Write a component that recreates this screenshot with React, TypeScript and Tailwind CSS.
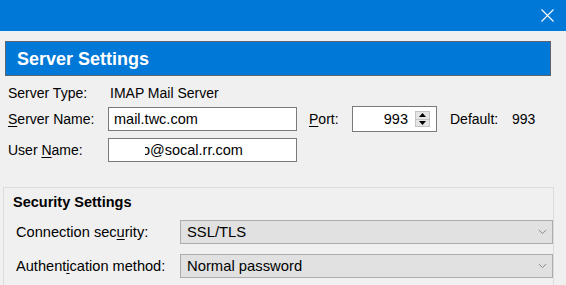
import React from 'react';

function Acc({ children }: { children: React.ReactNode }) {
  // access-key letter, underlined like a Windows dialog
  return <span className="underline decoration-1 underline-offset-[2px]">{children}</span>;
}

function Chevron() {
  return (
    <svg width="9" height="6" viewBox="0 0 9 6" className="shrink-0">
      <path d="M0.8 1 L4.5 4.6 L8.2 1" fill="none" stroke="#8a8a8a" strokeWidth="1" />
    </svg>
  );
}

function SelectBox({ value }: { value: string }) {
  return (
    <div className="flex-1 h-[24px] bg-[#e1e1e1] border border-[#adadad] flex items-center justify-between pl-[6px] pr-[5px] text-black text-[14.8px]">
      <span>{value}</span>
      <Chevron />
    </div>
  );
}

export default function App() {
  return (
    <div
      className="w-[566px] h-[285px] overflow-hidden bg-[#f0f0f0] text-[14px] leading-[16px] text-black"
      style={{ fontFamily: '"Liberation Sans", Arial, sans-serif' }}
    >
      {/* title bar */}
      <div className="h-[31px] bg-[#0078d7] flex items-center justify-end pr-[12px]">
        <svg width="13" height="13" viewBox="0 0 13 13">
          <path d="M0.5 0.5 L12.5 12.5 M12.5 0.5 L0.5 12.5" stroke="#ffffff" strokeWidth="1.1" />
        </svg>
      </div>

      {/* header */}
      <div className="mt-[10px] ml-[5px] w-[546px] h-[35px] bg-[#0078d7] border border-[#5d6670] flex items-center pl-[11px]">
        <span className="text-white font-bold text-[18px] leading-[20px]">Server Settings</span>
      </div>

      {/* server fields */}
      <div className="pl-[8px] mt-[9px] flex flex-col">
        <div className="flex h-[16px]">
          <span className="w-[102px]">Server Type:</span>
          <span>IMAP Mail Server</span>
        </div>

        <div className="flex items-center h-[26px] mt-[5px]">
          <span className="w-[100px]">
            <Acc>S</Acc>erver Name:
          </span>
          <div className="w-[189px] h-[24px] border border-[#7a7a7a] bg-white flex items-center pl-[5px] text-[14.5px]">
            mail.twc.com
          </div>
          <span className="ml-[12px] w-[43px]">
            <Acc>P</Acc>ort:
          </span>
          <div className="w-[85px] h-[26px] border border-[#7a7a7a] bg-white flex items-center justify-end pr-[6px] gap-[7px] text-[14.5px]">
            <span>993</span>
            <div className="w-[15px] h-[16px] bg-[#e5e5e5] border border-[#c4c4c4] flex flex-col">
              <div className="flex-1 flex items-center justify-center border-b border-[#c4c4c4]">
                <svg width="7" height="4" viewBox="0 0 7 4">
                  <path d="M3.5 0 L7 4 L0 4 Z" fill="#000" />
                </svg>
              </div>
              <div className="flex-1 flex items-center justify-center">
                <svg width="7" height="4" viewBox="0 0 7 4">
                  <path d="M0 0 L7 0 L3.5 4 Z" fill="#000" />
                </svg>
              </div>
            </div>
          </div>
          <span className="ml-[13px] w-[62px]">Default:</span>
          <span>993</span>
        </div>

        <div className="flex items-center h-[24px] mt-[6px]">
          <span className="w-[100px]">
            User <Acc>N</Acc>ame:
          </span>
          <div className="w-[189px] h-[24px] border border-[#7a7a7a] bg-white flex items-center pl-[36px] text-[14.5px]">
            <span className="inline-block w-[5px] overflow-hidden">
              <span className="inline-block -ml-[3px]">o</span>
            </span>
            <span>@socal.rr.com</span>
          </div>
        </div>
      </div>

      {/* security group */}
      <div className="mt-[25px] ml-[3px] w-[551px] h-[120px] border border-[#dcdcdc] pt-[6px]">
        <div className="pl-[9px] font-bold text-[14.5px] leading-[17px]">Security Settings</div>
        <div className="flex items-center mt-[9px] pl-[12px] text-[14.6px]">
          <span className="w-[164px]">
            Connection sec<Acc>u</Acc>rity:
          </span>
          <SelectBox value="SSL/TLS" />
        </div>
        <div className="flex items-center mt-[10px] pl-[12px] text-[14.6px]">
          <span className="w-[164px]">
            Authent<Acc>i</Acc>cation method:
          </span>
          <SelectBox value="Normal password" />
        </div>
      </div>
    </div>
  );
}
